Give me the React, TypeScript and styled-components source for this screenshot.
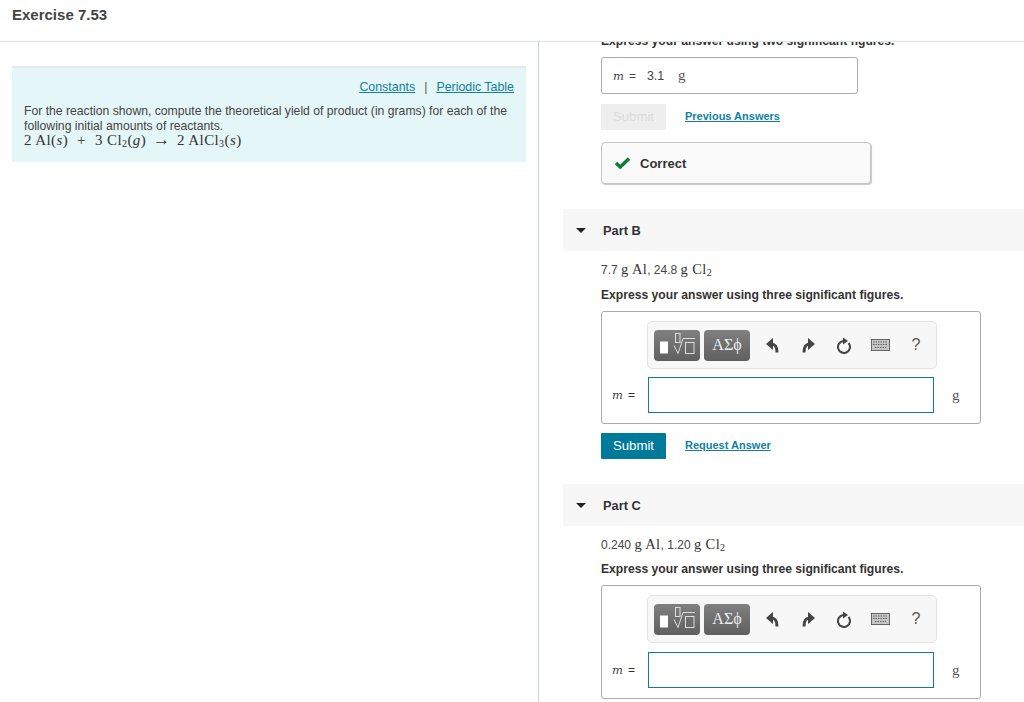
import React from "react";
import styled, { createGlobalStyle } from "styled-components";

const Global = createGlobalStyle`
  html, body { margin: 0; padding: 0; height: 702px; overflow: hidden; background: #fff; }
  body { font-family: "Liberation Sans", Arial, sans-serif; color: #333; }
  #root { height: 702px; }
`;
const Page = styled.div`display: flex; flex-direction: column; height: 702px; overflow: hidden;`;
const Header = styled.header`
  height: 41px; flex: none; border-bottom: 1px solid #dfe3e6; box-sizing: content-box;
  padding-left: 12px; display: flex; align-items: flex-start;
`;
const Title = styled.h1`margin: 5px 0 0; font-size: 15px; line-height: 19px; font-weight: 700; color: #444;`;
const Columns = styled.div`display: flex; flex: 1; min-height: 0;`;
const Left = styled.section`width: 539px; flex: none; box-sizing: border-box; padding: 24px 12px 0; border-right: 1px solid #c3d5de;`;
const Info = styled.div`
  width: 514px; height: 96px; box-sizing: border-box; background: #e4f6f7; border-top: 2px solid #e5ebec;
  padding: 11px 12px 0;
`;
const LinkRow = styled.div`display: flex; justify-content: flex-end; gap: 9px; font-size: 12.4px; line-height: 16px; color: #555;`;
const Link = styled.a`color: #127fa3; text-decoration: underline;`;
const Paragraph = styled.p`margin: 9px 0 0; font-size: 12.2px; line-height: 15px; color: #444;`;
const Equation = styled.div`
  display: flex; align-items: baseline; margin-top: -2px; font-family: "Liberation Serif", serif; font-size: 15px; line-height: 15px;
  color: #333; white-space: pre; letter-spacing: 0.4px;
`;
const Term = styled.span<{ $x: number }>`margin-left: ${(p) => p.$x}px;`;
const Arrow = styled(Term)`font-size: 17px; line-height: 15px; letter-spacing: 0;`;
const Ital = styled.i`font-style: italic;`;
const Sub = styled.sub`font-size: 10px; line-height: 0; vertical-align: -2px;`;
const Right = styled.section`flex: 1; min-width: 0; overflow: hidden;`;
const Scroller = styled.div`margin-top: -9px; padding-left: 24px;`;
const Body = styled.div`padding-left: 38px;`;
const Express = styled.div`font-size: 12.15px; line-height: 16px; font-weight: 700; color: #333;`;
const ClippedExpress = styled(Express)`height: 14px; width: 300px; white-space: nowrap;`;
const Done = styled.div`
  width: 257px; height: 37px; box-sizing: border-box; margin-top: 10px; border: 1px solid #aaa; border-radius: 3px;
  display: flex; align-items: center; padding-left: 11px; font-size: 12.5px; color: #444;
`;
const MathVar = styled.span`font-family: "DejaVu Serif", serif; font-style: italic; font-size: 11.5px; font-weight: 400; color: #444;`;
const Eq = styled.span`margin-left: 5px; font-size: 12px;`;
const Val = styled.span`margin-left: 11px; width: 31px;`;
const Unit = styled.span`font-family: "Liberation Serif", serif; font-size: 15px; color: #555;`;
const Actions = styled.div<{ $top: number }>`display: flex; align-items: center; gap: 19px; margin-top: ${(p) => p.$top}px; height: 26px;`;
const Btn = styled.button<{ $off?: boolean }>`
  width: 65px; height: 26px; padding: 0; border: 0; border-radius: 1px; font: 13.2px/26px "Liberation Sans", sans-serif;
  background: ${(p) => (p.$off ? "#eeeeee" : "#007a9b")}; color: ${(p) => (p.$off ? "#dcdcdc" : "#fff")};
`;
const ActionLink = styled.a`font-size: 11px; font-weight: 700; color: #127fa3; text-decoration: underline; position: relative; top: -1px;`;
const Correct = styled.div`
  width: 270px; height: 42px; box-sizing: border-box; margin-top: 12px; background: #fafafa; border: 1px solid #c4c4c4; border-radius: 4px;
  box-shadow: 1px 1px 1px #c9c9c9; display: flex; align-items: center; gap: 10px; padding: 0 13px; font-size: 13px; font-weight: 700; color: #333;
`;
const PartHeader = styled.div<{ $top: number }>`
  height: 42px; margin-top: ${(p) => p.$top}px; background: #f7f7f7; display: flex; align-items: center;
  font-size: 12.8px; font-weight: 700; color: #333; padding-left: 13px; gap: 17px;
`;
const Tri = styled.span`width: 0; height: 0; border: 5px solid transparent; border-top: 5px solid #222; border-bottom: 0;`;
const Given = styled.div<{ $bottom: number }>`
  margin: 10px 0 ${(p) => p.$bottom}px; font-family: "Liberation Sans", sans-serif; font-size: 12px; line-height: 17px; color: #444;
`;
const Sym = styled.span`font-family: "Liberation Serif", serif; font-size: 14.5px; color: #333; letter-spacing: 0.4px;`;
const Box = styled.div<{ $height: number }>`
  width: 380px; height: ${(p) => p.$height}px; box-sizing: border-box; margin-top: 8px; border: 1px solid #aaa; border-radius: 3px;
  padding: 9px 0 0 45px; position: relative;
`;
const Toolbar = styled.div`
  width: 290px; height: 48px; box-sizing: border-box; background: #f7f7f7; border: 1px solid #e3e3e3; border-radius: 5px;
  display: flex; align-items: center; padding-left: 6px;
`;
const ToolBtn = styled.div`
  flex: none; width: 46px; height: 31px; margin-right: 4px; border-radius: 4px; background: linear-gradient(#808080, #5f5f5f);
  display: flex; align-items: center; justify-content: center; color: #eee; font-family: "Liberation Serif", serif; font-size: 16px;
`;
const Tool = styled.div`flex: none; width: 36px; height: 24px; display: flex; align-items: center; justify-content: center; color: #555; font-size: 16px;`;
const Row = styled.div<{ $top: number }>`display: flex; align-items: center; margin: ${(p) => p.$top}px 0 0 -35px;`;
const Label = styled.span`width: 36px; flex: none; display: flex; align-items: center;`;
const Field = styled.div`width: 286px; height: 36px; box-sizing: border-box; border: 1px solid #127b9c; background: #fff;`;
const BoxUnit = styled(Unit)`margin-left: 18px;`;

const Check = () => (
  <svg width="15" height="12" viewBox="0 0 15 12"><path d="M1 6 L5.300 10 L14 1.500" fill="none" stroke="#0a7d3c" strokeWidth="3.400" /></svg>
);
const Templates = () => (
  <svg width="36" height="24" viewBox="0 0 36 24">
    <rect x="1" y="8.500" width="8" height="12" fill="#fff" />
    <rect x="16.500" y="0.500" width="4.500" height="9" fill="none" stroke="#ddd" />
    <path d="M15 12.500 L19 20.500 L24 5.500 H36" fill="none" stroke="#ddd" />
    <rect x="26.500" y="9.500" width="8.500" height="11" fill="none" stroke="#ddd" />
  </svg>
);
const Undo = () => (
  <svg width="13" height="15" viewBox="0 0 13 15">
    <path d="M0 6 L7 0 V12 Z" fill="#444" />
    <path d="M5 6 C9 6 11 8 11 14.500" fill="none" stroke="#444" strokeWidth="3" />
  </svg>
);
const Redo = () => (
  <svg width="13" height="15" viewBox="0 0 13 15">
    <path d="M13 6 L6 0 V12 Z" fill="#444" />
    <path d="M8 6 C4 6 2 8 2 14.500" fill="none" stroke="#444" strokeWidth="3" />
  </svg>
);
const Reset = () => (
  <svg width="16" height="17" viewBox="0 0 16 17">
    <path d="M7.500 4 A6 6 0 1 0 12.500 6" fill="none" stroke="#444" strokeWidth="2" />
    <path d="M7 0.500 L12 4 L7 7.500 Z" fill="#444" />
  </svg>
);
const Keyboard = () => (
  <svg width="19" height="12" viewBox="0 0 19 12">
    <rect x="0.500" y="0.500" width="18" height="11" fill="#c4c4c4" stroke="#666" />
    <path d="M2 3 H17 M2 5.500 H17 M4 8.500 H15" stroke="#666" strokeDasharray="1.500 1" />
  </svg>
);

const Answer = ({ height, gap }: { height: number; gap: number }) => (
  <Box $height={height}>
    <Toolbar>
      <ToolBtn><Templates /></ToolBtn>
      <ToolBtn>ΑΣϕ</ToolBtn>
      <Tool><Undo /></Tool>
      <Tool><Redo /></Tool>
      <Tool><Reset /></Tool>
      <Tool><Keyboard /></Tool>
      <Tool>?</Tool>
    </Toolbar>
    <Row $top={gap}>
      <Label><MathVar>m</MathVar><Eq>=</Eq></Label>
      <Field />
      <BoxUnit>g</BoxUnit>
    </Row>
  </Box>
);

export default function App() {
  return (
    <Page>
      <Global />
      <Header><Title>Exercise 7.53</Title></Header>
      <Columns>
        <Left>
          <Info>
            <LinkRow>
              <Link>Constants</Link><span>|</span><Link>Periodic Table</Link>
            </LinkRow>
            <Paragraph>
              For the reaction shown, compute the theoretical yield of product (in grams) for each of the following initial amounts of reactants.
            </Paragraph>
            <Equation>
              <span>2 Al(<Ital>s</Ital>)</span>
              <Term $x={9}>+</Term>
              <Term $x={9}>3 Cl<Sub>2</Sub>(<Ital>g</Ital>)</Term>
              <Arrow $x={7}>→</Arrow>
              <Term $x={7}>2 AlCl<Sub>3</Sub>(<Ital>s</Ital>)</Term>
            </Equation>
          </Info>
        </Left>
        <Right>
          <Scroller>
            <Body>
              <ClippedExpress>Express your answer using two significant figures.</ClippedExpress>
              <Done>
                <MathVar>m</MathVar><Eq>=</Eq><Val>3.1</Val><Unit>g</Unit>
              </Done>
              <Actions $top={10}>
                <Btn $off>Submit</Btn>
                <ActionLink>Previous Answers</ActionLink>
              </Actions>
              <Correct><Check />Correct</Correct>
            </Body>
            <PartHeader $top={25}><Tri />Part B</PartHeader>
            <Body>
              <Given $bottom={8}>7.7 <Sym>g Al</Sym>, 24.8 <Sym>g Cl<Sub>2</Sub></Sym></Given>
              <Express>Express your answer using three significant figures.</Express>
              <Answer height={113} gap={8} />
              <Actions $top={9}>
                <Btn>Submit</Btn>
                <ActionLink>Request Answer</ActionLink>
              </Actions>
            </Body>
            <PartHeader $top={25}><Tri />Part C</PartHeader>
            <Body>
              <Given $bottom={7}>0.240 <Sym>g Al</Sym>, 1.20 <Sym>g Cl<Sub>2</Sub></Sym></Given>
              <Express>Express your answer using three significant figures.</Express>
              <Answer height={114} gap={9} />
            </Body>
          </Scroller>
        </Right>
      </Columns>
    </Page>
  );
}
